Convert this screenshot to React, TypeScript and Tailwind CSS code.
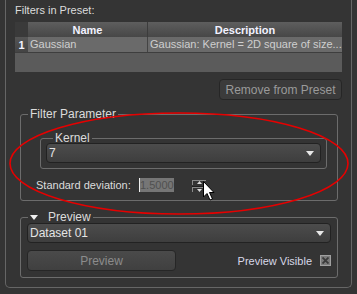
import React from "react";

function Combo({ label }: { label: string }) {
  return (
    <div className="flex h-[20px] items-center justify-between rounded-[4px] border border-[#222] bg-gradient-to-b from-[#4c4c4c] to-[#3e3e3e] pl-[2px] pr-[6px] text-[12px] text-[#e4e4e4]">
      <span>{label}</span>
      <svg width="8" height="5" viewBox="0 0 8 5">
        <path d="M0 0 L8 0 L4 5 Z" fill="#e8e8e8" />
      </svg>
    </div>
  );
}

function App() {
  return (
    <div className="relative h-[294px] w-[357px] overflow-hidden bg-[#343434] font-['Liberation_Sans',Arial,sans-serif] text-[11px] leading-[14px] text-[#dcdcdc]">
      <div className="ml-[5px] flex w-[347px] flex-col rounded-b-[5px] border-x border-b border-[#666] px-[9px] pb-[9px] pt-[3px]">
        <div className="h-[14px]">Filters in Preset:</div>

        {/* preset table */}
        <div className="mt-[5px] flex h-[50px] flex-col bg-[#5b5b5b]">
          <div className="flex h-[15px] bg-[#3a3a3a]">
            <div className="w-[13px]" />
            <div className="flex w-[120px] items-center justify-center border-r border-[#3c3c3c] bg-gradient-to-b from-[#5e5e5e] to-[#474747] font-bold text-[#f2f2ff]">
              Name
            </div>
            <div className="flex flex-1 items-center justify-center bg-gradient-to-b from-[#5e5e5e] to-[#474747] font-bold text-[#f2f2ff]">
              Description
            </div>
          </div>
          <div className="flex h-[16px] border-b border-[#3e3e3e] bg-[#6a6a6a] text-[#cfcfcf]">
            <div className="flex w-[13px] items-center justify-center bg-gradient-to-b from-[#555] to-[#444] font-bold text-[#f4f4ff]">
              1
            </div>
            <div className="w-[120px] truncate border-r border-[#444] pl-[2px] leading-[15px]">
              Gaussian
            </div>
            <div className="flex-1 truncate pl-[2px] leading-[15px]">
              Gaussian: Kernel = 2D square of size...
            </div>
          </div>
        </div>

        <button className="mt-[7px] flex h-[21px] w-[123px] items-center justify-center self-end rounded-[4px] border border-[#262626] bg-[#3b3b3b] text-[12px] text-[#9a9a9a]">
          Remove from Preset
        </button>

        {/* Filter Parameter */}
        <fieldset className="ml-[5px] mr-[4px] mt-[9px] rounded-[3px] border border-[#6c6c6c] pb-[8px]">
          <legend className="ml-[7px] px-[2px] text-[12px] leading-[10px]">Filter Parameter</legend>
          <fieldset className="ml-[19px] mr-[10px] mt-[14px] rounded-[3px] border border-[#6c6c6c] px-[5px] pb-[5px]">
            <legend className="ml-[7px] px-[2px] text-[12px] leading-[10px]">Kernel</legend>
            <Combo label="7" />
          </fieldset>
          <div className="ml-[15px] mt-[9px] flex h-[14px] items-center">
            <span className="w-[103px]">Standard deviation:</span>
            <div className="flex h-[14px] w-[35px] items-center border-l border-[#eee] bg-[#767676] text-[#505050]">
              1.5000
            </div>
            <div className="relative ml-[18px] flex h-[14px] w-[16px] flex-col gap-[1px] pt-[2px]">
              <div className="flex h-[6px] w-[14px] items-center justify-center border-l border-t border-[#8a8a8a]">
                <svg width="5" height="3" viewBox="0 0 5 3">
                  <path d="M0 3 L5 3 L2.5 0 Z" fill="#ddd" />
                </svg>
              </div>
              <div className="h-px w-[16px] bg-[#202020]" />
              <div className="flex h-[6px] w-[14px] items-center justify-center border-l border-t border-[#8a8a8a]">
                <svg width="5" height="3" viewBox="0 0 5 3">
                  <path d="M0 0 L5 0 L2.5 3 Z" fill="#ddd" />
                </svg>
              </div>
            </div>
          </div>
        </fieldset>

        {/* Preview */}
        <fieldset className="ml-[5px] mr-[4px] mt-[11px] rounded-[3px] border border-[#6c6c6c] px-[6px] pb-[6px]">
          <legend className="ml-[1px] flex items-center px-[2px] text-[12px] leading-[10px]">
            <svg width="8" height="5" viewBox="0 0 8 5" className="mr-[10px]">
              <path d="M0 0 L8 0 L4 5 Z" fill="#f0f0f0" />
            </svg>
            Preview
          </legend>
          <div className="mt-[1px]">
            <Combo label="Dataset 01" />
          </div>
          <div className="mt-[7px] flex items-center justify-between">
            <button className="flex h-[21px] w-[149px] items-center justify-center rounded-[4px] border border-[#262626] bg-gradient-to-b from-[#4a4a4a] to-[#404040] text-[12px] text-[#8c8c8c]">
              Preview
            </button>
            <div className="flex items-center gap-[8px]">
              <span className="text-[#d8d8e8]">Preview Visible</span>
              <div className="flex h-[11px] w-[11px] items-center justify-center border border-[#a0a0a0] bg-[#7a7a7a]">
                <svg width="7" height="7" viewBox="0 0 7 7">
                  <path d="M0.5 0.5 L6.5 6.5 M6.5 0.5 L0.5 6.5" stroke="#3a3a3a" strokeWidth="1.8" />
                </svg>
              </div>
            </div>
          </div>
        </fieldset>
      </div>

      {/* annotation ellipse and mouse pointer */}
      <svg className="pointer-events-none absolute left-0 top-0" width="357" height="294">
        <ellipse cx="179" cy="163.5" rx="169" ry="50.5" fill="none" stroke="#e60000" strokeWidth="1.6" />
        <path
          d="M203.5 181.5 L203.5 197 L207 193.5 L210 200 L212.5 199 L209.5 192.5 L214 192.5 Z"
          fill="#fff"
          stroke="#000"
          strokeWidth="1"
        />
      </svg>
    </div>
  );
}

export default App;
